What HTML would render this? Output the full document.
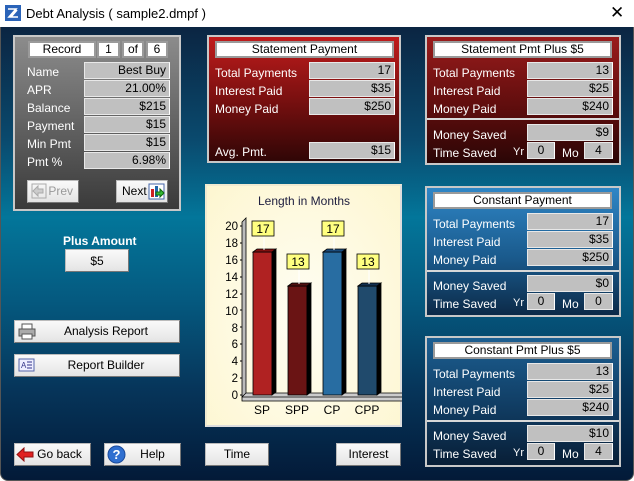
<!DOCTYPE html>
<html><head><meta charset="utf-8"><style>
*{box-sizing:border-box;margin:0;padding:0}
body{width:634px;height:481px;overflow:hidden;font-family:"Liberation Sans",sans-serif;font-size:12px;background:#fff;position:relative}
.a{position:absolute}
#title{left:0;top:0;width:634px;height:27px;background:#fff;color:#000;font-size:13px}
#main{left:0;top:27px;width:634px;height:454px;border-radius:0 0 8px 8px;border:1px solid #555;border-top:none;
background:linear-gradient(180deg,#0b2542 0%,#0a4a6e 25%,#03769a 42%,#055a80 60%,#06355a 80%,#031a38 100%)}
.lbl{position:absolute;color:#fff;font-size:12px;white-space:nowrap}
.v{position:absolute;height:17px;background:#c0c0c0;border:1px solid #e8e8e8;border-right-color:#fff;color:#000;text-align:right;padding-right:3px;font-size:12px;line-height:15px}
.wb{position:absolute;height:17px;background:#fff;border:2px solid #9a9a9a;color:#000;text-align:center;font-size:12px;line-height:13px}
.btn{position:absolute;background:linear-gradient(#fafafa,#e4e4e4);border:1px solid #bbb;border-right-color:#777;border-bottom-color:#777;color:#000;text-align:center;font-size:12px;line-height:21px;height:23px}
.panel{position:absolute;border:2px solid #c8c8c8}
.split{position:absolute;left:0;right:0;height:2px;background:#d8d8d8}
</style></head><body>
<div id="title" class="a">
<svg class="a" style="left:5px;top:5px" width="16" height="16"><rect width="16" height="16" fill="#2a63b8"/><path d="M3 4h8l-7 8h9M6 12l6-7" stroke="#fff" stroke-width="1.6" fill="none"/></svg>
<span class="a" style="left:26px;top:6px">Debt Analysis ( sample2.dmpf )</span>
<span class="a" style="left:610px;top:3px;font-size:17px">✕</span>
</div>
<div id="main" class="a"></div>

<!-- left record panel -->
<div class="panel" style="left:13px;top:35px;width:168px;height:176px;background:linear-gradient(#8c8c8c,#3a3a3a)"></div>
<div class="wb" style="left:28px;top:41px;width:68px">Record</div>
<div class="wb" style="left:97px;top:41px;width:23px">1</div>
<div class="wb" style="left:122px;top:41px;width:22px">of</div>
<div class="wb" style="left:146px;top:41px;width:22px">6</div>
<div class="lbl" style="left:27px;top:65px">Name</div><div class="v" style="left:84px;top:62px;width:86px">Best Buy</div>
<div class="lbl" style="left:27px;top:83px">APR</div><div class="v" style="left:84px;top:80px;width:86px">21.00%</div>
<div class="lbl" style="left:27px;top:101px">Balance</div><div class="v" style="left:84px;top:98px;width:86px">$215</div>
<div class="lbl" style="left:27px;top:119px">Payment</div><div class="v" style="left:84px;top:116px;width:86px">$15</div>
<div class="lbl" style="left:27px;top:137px">Min Pmt</div><div class="v" style="left:84px;top:134px;width:86px">$15</div>
<div class="lbl" style="left:27px;top:155px">Pmt %</div><div class="v" style="left:84px;top:152px;width:86px">6.98%</div>
<div class="btn" style="left:27px;top:180px;width:52px;color:#999;text-align:right;padding-right:5px">Prev</div>
<svg class="a" style="left:31px;top:183px" width="16" height="16"><rect x="1" y="1" width="14" height="14" fill="none" stroke="#aaa"/><path d="M12 6H7V3L2 8l5 5v-3h5z" fill="#ccc" stroke="#aaa"/></svg>
<div class="btn" style="left:116px;top:180px;width:52px;text-align:left;padding-left:5px">Next</div>
<svg class="a" style="left:148px;top:183px" width="17" height="17"><rect x="1" y="1" width="15" height="15" fill="#fff" stroke="#4466aa"/><rect x="3" y="6" width="3" height="8" fill="#c22"/><rect x="7" y="3" width="3" height="11" fill="#26a"/><path d="M8 9h4V6l4 4-4 4v-2H8z" fill="#3b3" stroke="#161"/></svg>

<div class="lbl" style="left:63px;top:234px;font-weight:bold">Plus Amount</div>
<div class="btn" style="left:65px;top:249px;width:64px;line-height:22px">$5</div>

<div class="btn" style="left:14px;top:320px;width:166px;padding-left:18px">Analysis Report</div>
<svg class="a" style="left:18px;top:323px" width="18" height="17"><rect x="4" y="1" width="10" height="6" fill="#fff" stroke="#555"/><rect x="1" y="6" width="16" height="7" fill="#aaa" stroke="#555"/><rect x="4" y="11" width="10" height="5" fill="#fff" stroke="#555"/></svg>
<div class="btn" style="left:14px;top:354px;width:166px;padding-left:18px">Report Builder</div>
<svg class="a" style="left:18px;top:357px" width="17" height="16"><rect x="1" y="2" width="15" height="12" fill="#eef" stroke="#56a"/><text x="3" y="11" font-size="8" fill="#338">A</text><path d="M9 5h5M9 8h5M9 11h5" stroke="#338"/></svg>

<div class="btn" style="left:14px;top:443px;width:77px;padding-left:14px">Go back</div>
<svg class="a" style="left:16px;top:447px" width="18" height="15"><path d="M1 7.5L8 1v4h9v5H8v4z" fill="#e02020" stroke="#901010"/></svg>
<div class="btn" style="left:104px;top:443px;width:77px;padding-left:20px">Help</div>
<svg class="a" style="left:107px;top:445px" width="19" height="19"><circle cx="9.5" cy="9.5" r="8.5" fill="#2f6fd0" stroke="#1a4a9a"/><text x="9.5" y="14" font-size="13" font-weight="bold" fill="#fff" text-anchor="middle">?</text></svg>
<div class="btn" style="left:205px;top:443px;width:64px">Time</div>
<div class="btn" style="left:336px;top:443px;width:65px">Interest</div>

<!-- Statement Payment -->
<div class="panel" style="left:207px;top:35px;width:194px;height:128px;background:linear-gradient(#c01c1c,#7a1010 50%,#300606)"></div>
<div class="wb" style="left:215px;top:41px;width:179px">Statement Payment</div>
<div class="lbl" style="left:215px;top:66px">Total Payments</div><div class="v" style="left:309px;top:62px;width:86px">17</div>
<div class="lbl" style="left:215px;top:84px">Interest Paid</div><div class="v" style="left:309px;top:80px;width:86px">$35</div>
<div class="lbl" style="left:215px;top:102px">Money Paid</div><div class="v" style="left:309px;top:98px;width:86px">$250</div>
<div class="lbl" style="left:215px;top:145px">Avg. Pmt.</div><div class="v" style="left:309px;top:142px;width:86px">$15</div>

<!-- Chart -->
<div class="a" style="left:205px;top:184px;width:197px;height:243px;background:radial-gradient(ellipse at 50% 55%,#fffef4,#fdf6d0);border:2px solid #f0ead0;border-right-color:#ddd;border-bottom-color:#ddd"></div>
<svg class="a" style="left:205px;top:184px" width="197" height="243" font-family="Liberation Sans" font-size="12">
<text x="99" y="21" text-anchor="middle" fill="#202040">Length in Months</text>
<path d="M37 213V38l4-4v176z" fill="#bbb" stroke="#000" stroke-width=".8"/>
<path d="M37 213h170M37 213l4-4h164l-4 4v4H37z" fill="#ccc" stroke="#000" stroke-width=".8"/>
<g stroke="#000" stroke-width="1">
<path d="M35 42h2M35 59h2M35 76h2M35 93h2M35 110h2M35 126h2M35 143h2M35 160h2M35 177h2M35 194h2M35 211h2"/>
</g>
<g text-anchor="end" fill="#000" font-size="11.5">
<text x="33" y="46">20</text><text x="33" y="63">18</text><text x="33" y="80">16</text><text x="33" y="97">14</text><text x="33" y="114">12</text><text x="33" y="131">10</text><text x="33" y="148">8</text><text x="33" y="164">6</text><text x="33" y="181">4</text><text x="33" y="198">2</text><text x="33" y="215">0</text>
</g>
<g stroke="#000" stroke-width=".8">
<rect x="48" y="68" width="19" height="143" fill="#b02222"/><path d="M67 68l4-3v143l-4 3z" fill="#000"/><path d="M48 68l4-3h19l-4 3z" fill="#801010"/>
<rect x="83" y="102" width="19" height="109" fill="#6a1414"/><path d="M102 102l4-3v109l-4 3z" fill="#000"/><path d="M83 102l4-3h19l-4 3z" fill="#501010"/>
<rect x="118" y="68" width="19" height="143" fill="#286da2"/><path d="M137 68l4-3v143l-4 3z" fill="#000"/><path d="M118 68l4-3h19l-4 3z" fill="#1a4a7a"/>
<rect x="153" y="102" width="19" height="109" fill="#204a6c"/><path d="M172 102l4-3v109l-4 3z" fill="#000"/><path d="M153 102l4-3h19l-4 3z" fill="#123050"/>
</g>
<g stroke="#fff"><path d="M59 52v14M94 86v14M129 52v14M164 86v14"/></g>
<g fill="#ffff80" stroke="#000" stroke-width=".8"><rect x="47" y="37" width="22" height="15"/><rect x="82" y="70" width="22" height="15"/><rect x="117" y="37" width="22" height="15"/><rect x="152" y="70" width="22" height="15"/></g>
<g text-anchor="middle" fill="#000"><text x="58" y="49">17</text><text x="93" y="82">13</text><text x="128" y="49">17</text><text x="163" y="82">13</text>
<text x="57" y="230">SP</text><text x="92" y="230">SPP</text><text x="127" y="230">CP</text><text x="162" y="230">CPP</text></g>
</svg>

<!-- Right panels -->
<div class="panel" style="left:425px;top:35px;width:196px;height:130px;background:linear-gradient(#9a1c1c,#5a0c0c 60%,#2a0606)"><div class="split" style="top:81px"></div></div>
<div class="wb" style="left:433px;top:41px;width:179px">Statement Pmt Plus $5</div>
<div class="lbl" style="left:433px;top:66px">Total Payments</div><div class="v" style="left:527px;top:62px;width:86px">13</div>
<div class="lbl" style="left:433px;top:84px">Interest Paid</div><div class="v" style="left:527px;top:80px;width:86px">$25</div>
<div class="lbl" style="left:433px;top:102px">Money Paid</div><div class="v" style="left:527px;top:98px;width:86px">$240</div>
<div class="lbl" style="left:433px;top:128px">Money Saved</div><div class="v" style="left:527px;top:124px;width:86px">$9</div>
<div class="lbl" style="left:433px;top:146px">Time Saved</div><div class="lbl" style="left:513px;top:146px;font-size:11px">Yr</div>
<div class="v" style="left:527px;top:142px;width:28px;text-align:center;padding:0">0</div><div class="lbl" style="left:562px;top:146px">Mo</div>
<div class="v" style="left:584px;top:142px;width:29px;text-align:center;padding:0">4</div>

<div class="panel" style="left:425px;top:186px;width:196px;height:131px;background:linear-gradient(#2f86c6,#1a5a8c 55%,#0c2a48)"><div class="split" style="top:82px"></div></div>
<div class="wb" style="left:433px;top:192px;width:179px">Constant Payment</div>
<div class="lbl" style="left:433px;top:217px">Total Payments</div><div class="v" style="left:527px;top:213px;width:86px">17</div>
<div class="lbl" style="left:433px;top:235px">Interest Paid</div><div class="v" style="left:527px;top:231px;width:86px">$35</div>
<div class="lbl" style="left:433px;top:253px">Money Paid</div><div class="v" style="left:527px;top:249px;width:86px">$250</div>
<div class="lbl" style="left:433px;top:279px">Money Saved</div><div class="v" style="left:527px;top:275px;width:86px">$0</div>
<div class="lbl" style="left:433px;top:297px">Time Saved</div><div class="lbl" style="left:513px;top:297px;font-size:11px">Yr</div>
<div class="v" style="left:527px;top:293px;width:28px;text-align:center;padding:0">0</div><div class="lbl" style="left:562px;top:297px">Mo</div>
<div class="v" style="left:584px;top:293px;width:29px;text-align:center;padding:0">0</div>

<div class="panel" style="left:425px;top:336px;width:196px;height:131px;background:linear-gradient(#1c5f92,#103c62 55%,#081e36)"><div class="split" style="top:82px"></div></div>
<div class="wb" style="left:433px;top:342px;width:179px">Constant Pmt Plus $5</div>
<div class="lbl" style="left:433px;top:367px">Total Payments</div><div class="v" style="left:527px;top:363px;width:86px">13</div>
<div class="lbl" style="left:433px;top:385px">Interest Paid</div><div class="v" style="left:527px;top:381px;width:86px">$25</div>
<div class="lbl" style="left:433px;top:403px">Money Paid</div><div class="v" style="left:527px;top:399px;width:86px">$240</div>
<div class="lbl" style="left:433px;top:429px">Money Saved</div><div class="v" style="left:527px;top:425px;width:86px">$10</div>
<div class="lbl" style="left:433px;top:447px">Time Saved</div><div class="lbl" style="left:513px;top:447px;font-size:11px">Yr</div>
<div class="v" style="left:527px;top:443px;width:28px;text-align:center;padding:0">0</div><div class="lbl" style="left:562px;top:447px">Mo</div>
<div class="v" style="left:584px;top:443px;width:29px;text-align:center;padding:0">4</div>
</body></html>
